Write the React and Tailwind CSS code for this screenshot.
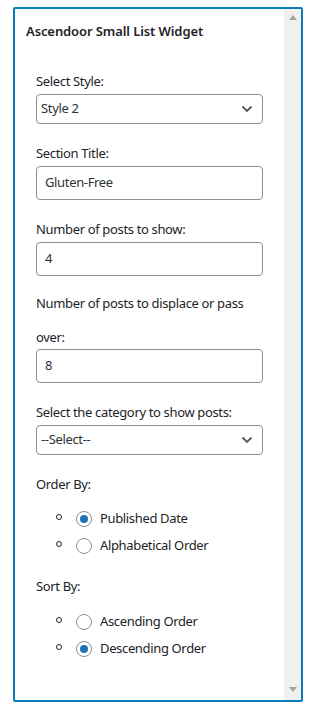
const font = { fontFamily: '"Noto Sans", "Open Sans", sans-serif' };

const Chevron = () => (
  <svg width="12" height="8" viewBox="0 0 12 8" className="shrink-0">
    <path d="M1.5 1.5 L6 6 L10.5 1.5" fill="none" stroke="#50575e" strokeWidth="1.8" />
  </svg>
);

const Field = ({ label, children }) => (
  <div className="mt-[20px]">
    <div className="leading-[18px]">{label}</div>
    <div className="mt-[4px]">{children}</div>
  </div>
);

const SelectBox = ({ value }) => (
  <div className="h-[30px] w-[227px] border border-[#8c8f94] rounded-[4px] flex items-center justify-between pl-[4px] pr-[9px] text-[#2c3338]">
    <span>{value}</span>
    <Chevron />
  </div>
);

const TextBox = ({ value }) => (
  <div className="h-[34px] w-[227px] border border-[#8c8f94] rounded-[4px] flex items-center pl-[8px] text-[#2c3338]">
    {value}
  </div>
);

const Radio = ({ label, checked }) => (
  <div className="h-[27px] flex items-center">
    <span className="w-[6px] h-[6px] rounded-full border-[1.5px] border-[#1d2327] ml-[20px] -mt-[4px]" />
    <span className="ml-[14px] w-[16px] h-[16px] rounded-full border border-[#8c8f94] bg-white flex items-center justify-center">
      {checked && <span className="w-[8px] h-[8px] rounded-full bg-[#2271b1]" />}
    </span>
    <span className="ml-[8px]">{label}</span>
  </div>
);

export default function App() {
  return (
    <div className="min-h-screen bg-white pt-[7px] pl-[13px]" style={font}>
      <div className="w-[290px] h-[695px] border-2 border-[#0a7cba] rounded-[2px] flex overflow-hidden text-[13px] text-[#1d2327]">
        <div className="flex-1 pt-[13px]">
          <div className="pl-[11px] leading-[18px] font-semibold tracking-[-0.1px]">Ascendoor Small List Widget</div>
          <div className="px-[21px] pt-[12px] tracking-[-0.35px]">
            <Field label="Select Style:">
              <SelectBox value="Style 2" />
            </Field>
            <Field label="Section Title:">
              <TextBox value="Gluten-Free" />
            </Field>
            <Field label="Number of posts to show:">
              <TextBox value="4" />
            </Field>
            <div className="mt-[10px]">
              <div className="leading-[34px]">Number of posts to displace or pass over:</div>
              <div className="-mt-[5px]">
                <TextBox value="8" />
              </div>
            </div>
            <Field label="Select the category to show posts:">
              <SelectBox value="--Select--" />
            </Field>
            <div className="mt-[20px] leading-[18px]">Order By:</div>
            <div className="mt-[12px]">
              <Radio label="Published Date" checked />
              <Radio label="Alphabetical Order" />
            </div>
            <div className="mt-[18px] leading-[18px]">Sort By:</div>
            <div className="mt-[13px]">
              <Radio label="Ascending Order" />
              <Radio label="Descending Order" checked />
            </div>
          </div>
        </div>
        <div className="w-[17px] bg-[#f0f0f0] flex flex-col items-center justify-between pt-[6px] pb-[8px]">
          <svg width="8" height="5" viewBox="0 0 8 5">
            <path d="M0 5 L4 0 L8 5 Z" fill="#a3a3a3" />
          </svg>
          <svg width="8" height="5" viewBox="0 0 8 5">
            <path d="M0 0 L4 5 L8 0 Z" fill="#a3a3a3" />
          </svg>
        </div>
      </div>
    </div>
  );
}
